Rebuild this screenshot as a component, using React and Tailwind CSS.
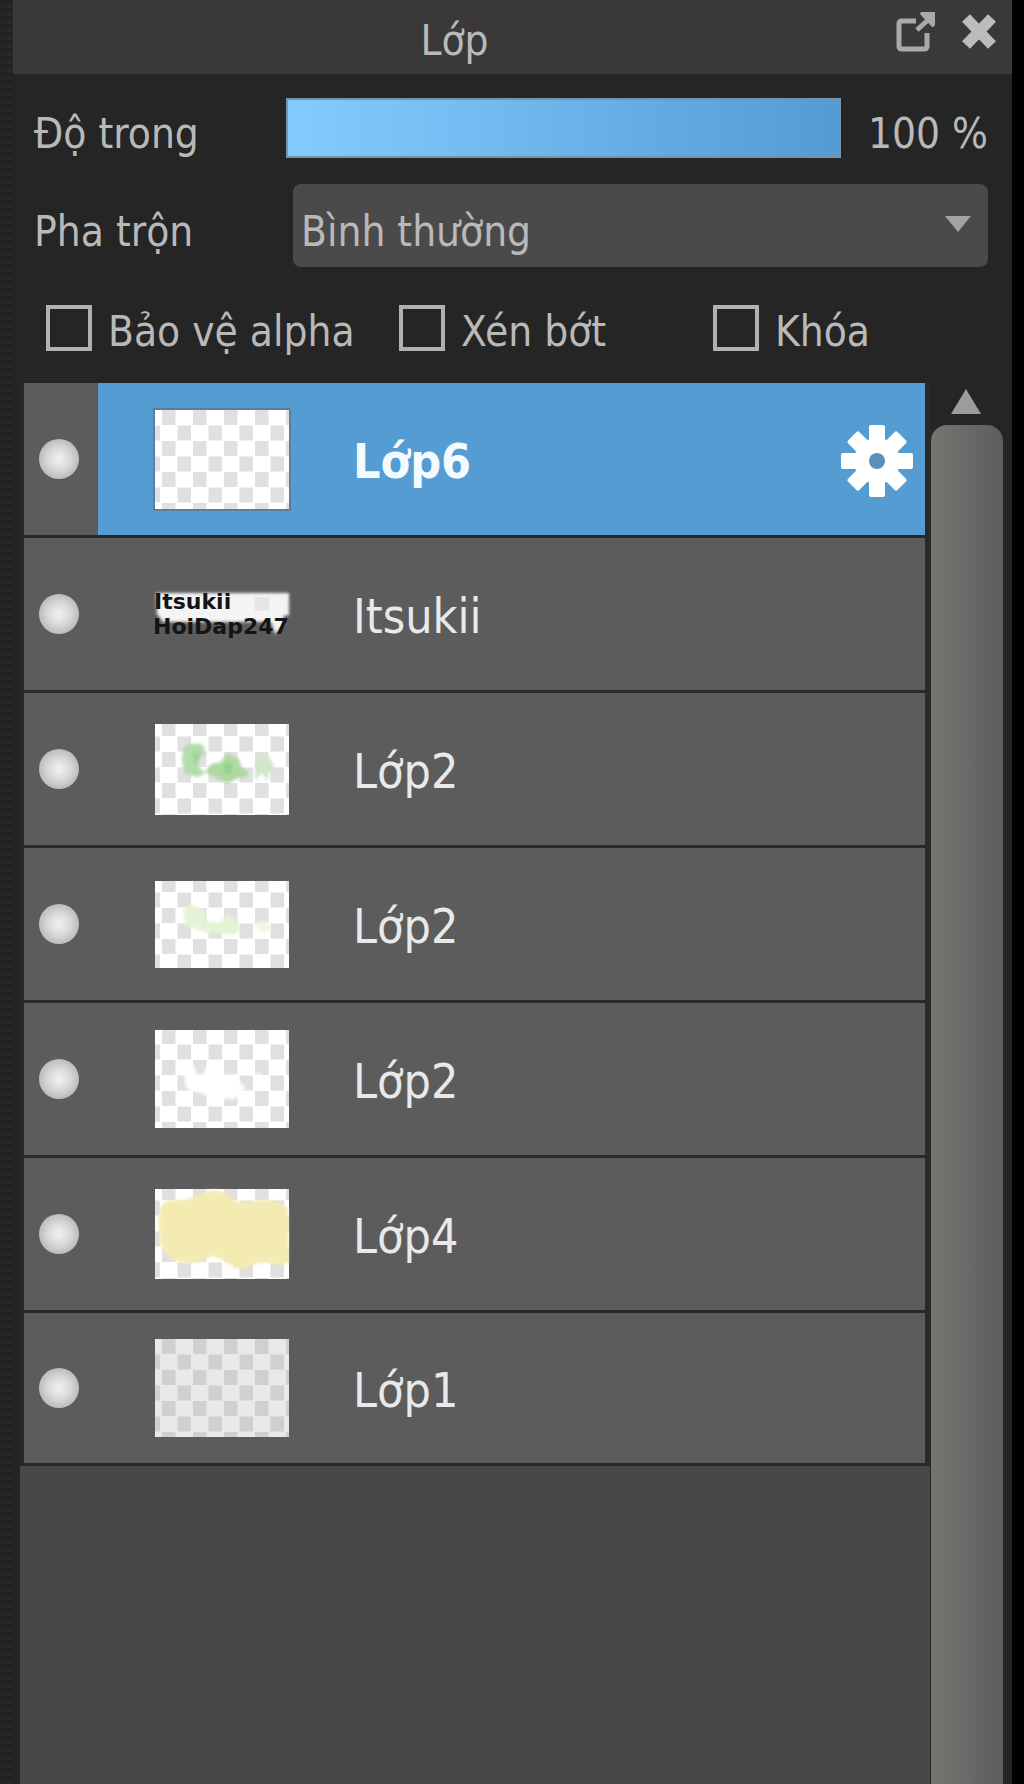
import { useState } from 'react';

const LAYERS = [
  { id: 1, name: 'Lớp6',    art: 'empty',  height: 99, phase: 0  },
  { id: 2, name: 'Itsukii', art: 'text',   height: 45, phase: 0  },
  { id: 3, name: 'Lớp2',    art: 'green',  height: 91, phase: -3 },
  { id: 4, name: 'Lớp2',    art: 'light',  height: 87, phase: -4 },
  { id: 5, name: 'Lớp2',    art: 'white',  height: 98, phase: -1 },
  { id: 6, name: 'Lớp4',    art: 'yellow', height: 90, phase: -4 },
  { id: 7, name: 'Lớp1',    art: 'veil',   height: 98, phase: 0  },
];

const OPTIONS = [
  ['alpha', 'Bảo vệ alpha'],
  ['clip',  'Xén bớt'],
  ['lock',  'Khóa'],
];

function Art({ kind }) {
  if (kind === 'text') {
    return (
      <g fill="#151515" fontFamily="DejaVu Sans" fontWeight="bold" fontSize="22">
        <text x="-1" y="17">Itsukii</text>
        <text x="-2" y="42">HoiDap247</text>
      </g>
    );
  }
  if (kind === 'green') {
    return (
      <g filter="url(#soft)">
        <path d="M28 24q8-7 20-3l3 8-8 5 1 10 7 5-8 4-13-3-3-13z" fill="#b4ddad"/>
        <path d="M37 29l7-2 1 8-5 6z" fill="#9bd398"/>
        <path d="M50 48l6-8 10-2 6-9 12 6 3 9 7 4-3 5-10 2-9 5-9-5z" fill="#aedaa2"/>
        <path d="M69 38l9 2-2 11-8-3z" fill="#95d38d"/>
        <path d="M100 42l4-10 9 0 6 9 1 10-6-3-2 9-5-8-7 8z" fill="#d0e8ca"/>
      </g>
    );
  }
  if (kind === 'light') {
    return (
      <g filter="url(#soft)" fill="#e4f3d6">
        <path d="M28 29l8-5 12 4 4 13 13 1 8-9 8 6 5 10-8 5-24-2-24-8z"/>
        <path d="M97 43l13-4 7 9-10 4z" fill="#edf8e4"/>
      </g>
    );
  }
  if (kind === 'white') {
    return (
      <g filter="url(#soft)" fill="#fff">
        <path d="M28 34l12 2 1 8 8 0 2-8 16 3 3 7 12-2 4 10 5 3-7 8-14 4-15-2-12-5-12-4z"/>
        <path d="M100 44l5-2 2 7 8 7-9 4-6-8zM70 62l7 8 7-4-3-7z"/>
      </g>
    );
  }
  if (kind === 'yellow') {
    return (
      <path
        d="M4 24q2-13 14-13 12 1 24-4l6-3q12-6 24 1 6 6 12 8h14q6-4 16-2l12 3q7 3 7 10v50q-6 4-16 0h-12l-8 2-9 4-9-1-12-9-10-3-9 5-12 3-13-2-10-7q-9-6-9-19z"
        fill="#f4ebb3"
        filter="url(#soft)"
      />
    );
  }
  return null;
}

function Thumbnail({ layer, selected }) {
  const veil = layer.art === 'veil';
  const patternId = `checker-${layer.id}`;
  return (
    <svg
      width="134"
      height={layer.height}
      className={`shrink-0 overflow-visible ${selected ? 'outline-2 outline-[#5b7f9b]' : ''}`}
      aria-hidden="true"
    >
      <defs>
        <pattern id={patternId} width="31" height="31" patternUnits="userSpaceOnUse" patternTransform={`translate(7 ${layer.phase})`}>
          <rect width="31" height="31" fill={veil ? '#ebe8eb' : '#ffffff'}/>
          <rect width="13.5" height="15" fill={veil ? '#d2cfd2' : '#e0e0e0'}/>
          <rect x="15.5" y="15.5" width="13.5" height="15" fill={veil ? '#d2cfd2' : '#e0e0e0'}/>
        </pattern>
        <filter id="soft"><feGaussianBlur stdDeviation="1.8"/></filter>
      </defs>
      {layer.art === 'text' ? (
        <>
          <path d="M1 1h133v22l-6 1 2 8-10 10-4-12H8l-6-8z" fill="#f4f4f4" filter="url(#soft)"/>
          <rect x="100" y="5" width="14" height="14" fill="#e6e6e6"/>
        </>
      ) : (
        <rect width="134" height={layer.height} fill={`url(#${patternId})`}/>
      )}
      <Art kind={layer.art}/>
    </svg>
  );
}

function GearIcon() {
  return (
    <svg width="72" height="76" viewBox="-36 -40 72 76" aria-hidden="true">
      <g fill="#fff">
        {[0, 45, 90, 135].map(angle => (
          <rect
            key={angle}
            x="-8"
            y={angle % 90 ? -35 : -36}
            width="16"
            height={angle % 90 ? 70 : 72}
            rx="2"
            transform={`rotate(${angle})`}
          />
        ))}
        <circle r="23"/>
      </g>
      <circle r="8" fill="#5c8fba"/>
    </svg>
  );
}

function LayerRow({ layer, selected, visible, onSelect, onToggle }) {
  return (
    <li className="flex h-[155px] border-b-3 border-[#292929] last:h-[153px]">
      <button
        onClick={onToggle}
        aria-label={layer.name}
        aria-pressed={visible}
        className="w-[74px] shrink-0 pl-[15px] bg-[#5c5c5c]"
      >
        <span className={`block size-10 rounded-full bg-[radial-gradient(circle,#ececec_10%,#d8d8d8_40%,#bebebe_68%)] ${visible ? '' : 'opacity-0'}`}/>
      </button>
      <button
        onClick={onSelect}
        className={`flex flex-1 items-center pl-[57px] pr-3 text-left text-[48px] leading-none ${selected ? 'bg-[#549cd2] font-bold text-[#f4fbff]' : 'bg-[#5c5c5c] text-[#e9e9e9]'}`}
      >
        <Thumbnail layer={layer} selected={selected}/>
        <span className="flex-1 pl-16 pt-1">{layer.name}</span>
        {selected && <GearIcon/>}
      </button>
    </li>
  );
}

export default function App() {
  const [opacity, setOpacity] = useState(100);
  const [selected, setSelected] = useState(1);
  const [hidden, setHidden] = useState([]);

  const toggle = id => setHidden(h => h.includes(id) ? h.filter(x => x !== id) : [...h, id]);

  return (
    <div className="flex min-h-screen bg-black pr-3 font-['DejaVu_Sans_Condensed','DejaVu_Sans',sans-serif] text-[42px] leading-none text-[#b9b9b9]">
      <div className="w-[13px] shrink-0 bg-[repeating-linear-gradient(#222222_0px,#222222_4px,#272727_4px,#272727_8px)]"/>
      <main className="flex min-w-0 flex-1 flex-col bg-[#252525]">
        <header className="flex h-[74px] bg-[#3a3838]">
          <h1 className="flex-1 pt-5 text-center">Lớp</h1>
          <div className="flex items-start gap-5 pr-3 pt-3">
            <button aria-label="Tách" className="h-10">
              <svg width="44" height="40" viewBox="0 0 44 40" fill="none" stroke="#aaa8a8" strokeWidth="5" aria-hidden="true">
                <path d="M20 9H6q-3 0-3 3v22q0 3 3 3h22q3 0 3-3V21"/>
                <path d="M21 18L33 7"/>
                <path d="M24 2q0-2 2-2h13v12q0 3-3 3z" fill="#aaa8a8" stroke="none"/>
              </svg>
            </button>
            <button aria-label="Đóng" className="h-10">
              <svg width="40" height="40" viewBox="0 0 40 40" stroke="#bdbbbb" strokeWidth="11" aria-hidden="true">
                <path d="M6 6L32 33M32 6L6 33"/>
              </svg>
            </button>
          </div>
        </header>

        <div className="flex items-center pl-[21px] pr-6 pt-6">
          <label htmlFor="opacity" className="w-[252px] shrink-0 pt-3">Độ trong</label>
          <input
            id="opacity"
            type="range"
            min="0"
            max="100"
            value={opacity}
            onChange={e => setOpacity(+e.target.value)}
            style={{ backgroundSize: `${opacity}% 100%` }}
            className="h-[60px] min-w-0 flex-1 appearance-none border-2 border-[#7894a8] bg-[#3a3a3a] bg-linear-to-r from-[#84ccff] to-[#529bd4] bg-no-repeat [&::-webkit-slider-thumb]:size-0 [&::-webkit-slider-thumb]:appearance-none"
          />
          <span className="w-[147px] shrink-0 whitespace-nowrap pt-3 text-right">{opacity} %</span>
        </div>

        <div className="flex items-center pl-[21px] pr-6 pt-[26px]">
          <label htmlFor="blend" className="w-[259px] shrink-0 pt-3">Pha trộn</label>
          <div className="relative flex-1">
            <select id="blend" className="h-[83px] w-full appearance-none rounded-lg bg-[#4a4a4a] pl-2 pt-3 leading-[60px]">
              <option>Bình thường</option>
            </select>
            <svg width="28" height="16" className="pointer-events-none absolute right-4 top-8" aria-hidden="true">
              <path d="M1 0h26L14 16z" fill="#a3a3a3"/>
            </svg>
          </div>
        </div>

        <div className="grid grid-cols-[353fr_314fr_275fr] pl-[33px] pr-6 pt-9">
          {OPTIONS.map(([id, label]) => (
            <label key={id} className="flex items-center gap-4 whitespace-nowrap">
              <input type="checkbox" className="size-[46px] shrink-0 appearance-none border-4 border-[#b2b0b0] checked:bg-[#549cd2]"/>
              <span className="pt-2">{label}</span>
            </label>
          ))}
        </div>

        <div className="flex flex-1 pl-[7px] pt-[30px]">
          <div className="min-w-0 flex-1 bg-[#4a4846]">
            <ul className="bg-[#292929] pl-1 pr-[5px]">
              {LAYERS.map(layer => (
                <LayerRow
                  key={layer.id}
                  layer={layer}
                  selected={selected === layer.id}
                  visible={!hidden.includes(layer.id)}
                  onSelect={() => setSelected(layer.id)}
                  onToggle={() => toggle(layer.id)}
                />
              ))}
            </ul>
          </div>
          {/* Scrollbar */}
          <div className="flex w-[82px] shrink-0 flex-col">
            <button aria-label="Cuộn lên" className="h-[42px] w-[75px] pl-[21px]">
              <svg width="31" height="32" aria-hidden="true">
                <path d="M15 1L30 26H0z" fill="#9c9c9c"/>
              </svg>
            </button>
            <div className="ml-px w-[72px] flex-1 rounded-t-2xl bg-linear-to-r from-[#757571] to-[#5d5d5d]"/>
          </div>
        </div>
      </main>
    </div>
  );
}
